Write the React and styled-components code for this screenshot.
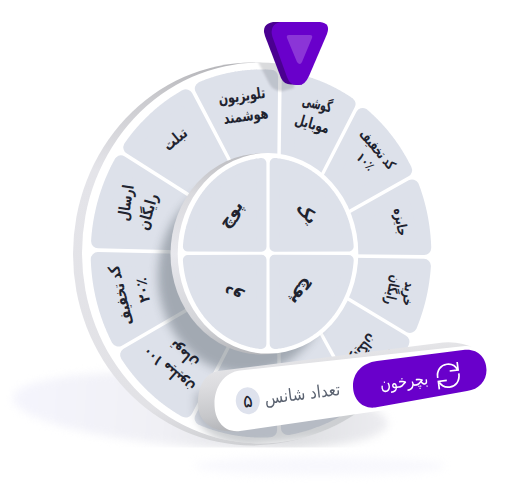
import React from "react";
import styled, { createGlobalStyle } from "styled-components";

const Global = createGlobalStyle`
  body { margin: 0; background: #fff; font-family: "DejaVu Sans", sans-serif; }
`;
const Stage = styled.main`
  position: relative;
  width: 520px;
  height: 500px;
  overflow: hidden;
  background: #fff;
`;
const Art = styled.svg`
  display: block;
  width: 520px;
  height: 500px;
`;
const Label = styled.text`
  font-family: "DejaVu Sans", sans-serif;
  font-weight: 700;
  font-size: ${(p) => p.$size || 15.5}px;
  fill: #20232f;
  text-anchor: middle;
  direction: rtl;
`;
const PanelContent = styled.section`
  position: absolute;
  left: 235px;
  top: 366px;
  width: 226px;
  height: 44px;
  display: flex;
  align-items: center;
  justify-content: space-between;
  direction: rtl;
  transform: rotate(-7deg);
`;
const SpinButton = styled.button`
  display: flex;
  align-items: center;
  gap: 9px;
  height: 42px;
  padding: 0;
  border: 0;
  background: none;
  color: #fff;
  font: 17px "DejaVu Sans", sans-serif;
`;
const SpinIcon = styled.svg`
  flex: none;
  width: 24px;
  height: 28px;
`;
const Chances = styled.div`
  display: flex;
  align-items: center;
  gap: 5px;
  color: #5a6270;
  font-size: 17px;
`;
const Fit = styled.span`
  display: flex;
  justify-content: center;
  width: ${(p) => p.$width}px;
  white-space: nowrap;
  line-height: 28px;
  transform: scaleX(${(p) => p.$stretch || 1});
`;
const Count = styled.span`
  display: grid;
  place-items: center;
  width: 24px;
  height: 27px;
  border-radius: 50%;
  background: #dee2ed;
  color: #20232f;
  font-size: 18px;
  line-height: 27px;
`;

// Each spoke runs from the outer ring to the inner disc.
const OUTER_SPOKES = [
  [280, 70, 279, 160],
  [357, 107, 322, 175],
  [418, 173, 345, 214],
  [431, 257, 350, 256],
  [418, 341, 345, 297],
  [357, 399, 318, 328],
  [279, 436, 279, 345],
  [192, 418, 232, 340],
  [118, 350, 192, 307],
  [91, 250, 178, 252],
  [118, 150, 192, 197],
  [191, 87, 232, 165],
];
const INNER_SPOKES = [
  [268, 158, 268, 253.3],
  [353.5, 253.3, 268, 253.3],
  [268, 349, 268, 253.3],
  [183, 253.3, 268, 253.3],
];

function cells(spokes, ring, radius, gap) {
  const inset = radius + gap / 2;
  const n = spokes.length;
  return spokes.map((a, i) => {
    const b = spokes[(i + 1) % n];
    const angle = (s) => Math.atan2((s[1] - ring.cy) / ring.ry, (s[0] - ring.cx) / ring.rx);
    const from = angle(a);
    let to = angle(b);
    if (to < from) to += Math.PI * 2;
    const distance = (s, x, y, sign) => {
      const dx = s[0] - s[2];
      const dy = s[1] - s[3];
      return (sign * (dx * (y - s[3]) - dy * (x - s[2]))) / Math.hypot(dx, dy);
    };
    const points = [];
    for (let k = 0; k <= 400; k++) {
      const t = from + ((to - from) * k) / 400;
      const x = ring.cx + (ring.rx - radius) * Math.cos(t);
      const y = ring.cy + (ring.ry - radius) * Math.sin(t);
      if (distance(a, x, y, 1) >= inset && distance(b, x, y, -1) >= inset) points.push([x, y]);
    }
    const foot = (s, sign) => {
      const dx = s[0] - s[2];
      const dy = s[1] - s[3];
      const len = Math.hypot(dx, dy);
      return [s[2] - (sign * dy * inset) / len, s[3] + (sign * dx * inset) / len];
    };
    if (n === 4) {
      const sx = i < 2 ? 1 : -1;
      const sy = i === 0 || i === 3 ? -1 : 1;
      points.push([268 + sx * inset, 253.3 + sy * inset]);
    } else {
      points.push(foot(b, -1), foot(a, 1));
    }
    return "M" + points.map((p) => p[0].toFixed(1) + " " + p[1].toFixed(1)).join("L") + "Z";
  });
}

const OUTER_CELLS = cells(OUTER_SPOKES, { cx: 261, cy: 253.5, rx: 170.3, ry: 184 }, 7, 3.4);
const INNER_CELLS = cells(INNER_SPOKES, { cx: 268.3, cy: 253.5, rx: 85.6, ry: 95.8 }, 5, 3);

const LABELS = [
  { t: "گوشی", x: 317, y: 105, r: 14, w: 30 },
  { t: "موبایل", x: 312, y: 125, r: 16, w: 35 },
  { t: "کد تخفیف", x: 377, y: 150, r: 50, w: 47, s: 14 },
  { t: "۱۰٪", x: 365, y: 162, r: 45, w: 19, s: 13 },
  { t: "جایزه", x: 400, y: 222, r: 80, w: 28, s: 14 },
  { t: "خرید", x: 408, y: 294, r: 97, w: 24, s: 14 },
  { t: "رایگان", x: 392, y: 290, r: 103, w: 30, s: 14 },
  { t: "ارسال", x: 385, y: 363, r: 130, w: 28, s: 14 },
  { t: "رایگان", x: 363, y: 348, r: 130, w: 32, s: 14 },
  { t: "۱۰۰ میلیون", x: 169, y: 369, r: 221, w: 62 },
  { t: "تومان", x: 184, y: 354, r: 221, w: 33 },
  { t: "کد تخفیف", x: 122, y: 295, r: 256, w: 61 },
  { t: "۲۰٪", x: 144, y: 290, r: 260, w: 25, s: 15 },
  { t: "ارسال", x: 127, y: 203, r: 279, w: 36 },
  { t: "رایگان", x: 149, y: 212, r: 286, w: 37 },
  { t: "تبلت", x: 176, y: 140, r: 320, w: 26 },
  { t: "تلویزیون", x: 242, y: 97, r: 352, w: 47 },
  { t: "هوشمند", x: 246, y: 117, r: 352, w: 45 },
  { t: "پوچ", x: 232, y: 215, r: 306, w: 29, s: 17 },
  { t: "یک", x: 306, y: 214, r: 50, w: 22, s: 17 },
  { t: "دو", x: 233, y: 293, r: 210, w: 18, s: 17 },
  { t: "پوچ", x: 302, y: 292, r: 127, w: 29, s: 17 },
];

function Definitions() {
  return (
    <defs>
      <linearGradient id="rim" x1="0" y1="0" x2="0" y2="1">
        <stop offset="0" stopColor="#b4b4b8" />
        <stop offset=".09" stopColor="#cacace" />
        <stop offset=".28" stopColor="#e4e4e9" />
        <stop offset=".9" stopColor="#e2e2e6" />
        <stop offset="1" stopColor="#cfd0d3" />
      </linearGradient>
      <linearGradient id="discRim" x1="0" y1="0" x2="0" y2="1">
        <stop offset="0" stopColor="#bcbcc0" />
        <stop offset=".2" stopColor="#d9d9dd" />
        <stop offset=".5" stopColor="#e8e8ed" />
        <stop offset=".85" stopColor="#d3d4d8" />
        <stop offset="1" stopColor="#b5b6ba" />
      </linearGradient>
      <linearGradient id="panelRim" gradientUnits="userSpaceOnUse" x1="215" y1="366" x2="222" y2="432">
        <stop offset="0" stopColor="#e5e5e8" />
        <stop offset=".3" stopColor="#dcdcdf" />
        <stop offset=".75" stopColor="#c6c7ca" />
        <stop offset="1" stopColor="#b3b4b8" />
      </linearGradient>
      <linearGradient id="floor" gradientUnits="userSpaceOnUse" x1="10" y1="0" x2="390" y2="0">
        <stop offset="0" stopColor="#f5f5fd" />
        <stop offset=".4" stopColor="#f0f0f5" />
        <stop offset=".75" stopColor="#dedfe2" />
        <stop offset="1" stopColor="#ededf1" />
      </linearGradient>
      <filter id="blur1" x="-30%" y="-30%" width="160%" height="160%"><feGaussianBlur stdDeviation="1.3" /></filter>
      <filter id="blur3" x="-30%" y="-50%" width="160%" height="200%" colorInterpolationFilters="sRGB"><feGaussianBlur stdDeviation="4" /></filter>
      <filter id="blur6" x="-30%" y="-50%" width="160%" height="200%"><feGaussianBlur stdDeviation="5" /></filter>
      <clipPath id="face"><ellipse cx="260" cy="253" rx="178" ry="190.5" /></clipPath>
      <clipPath id="ground"><rect width="520" height="447.5" /></clipPath>
    </defs>
  );
}

function Floor() {
  return (
    <g>
      <ellipse cx="320" cy="466" rx="125" ry="9" fill="#f8f8fd" filter="url(#blur3)" />
      <g clipPath="url(#ground)">
        <ellipse cx="200" cy="411" rx="188" ry="36" fill="url(#floor)" filter="url(#blur3)" transform="rotate(4 200 411)" />
      </g>
    </g>
  );
}

function Wheel() {
  return (
    <g>
      <ellipse cx="252.5" cy="254" rx="179.5" ry="191.5" fill="url(#rim)" />
      <ellipse cx="260" cy="253" rx="178" ry="190.5" fill="#fff" />
      <g fill="#dde1ea" stroke="#dde1ea" strokeWidth="14" strokeLinejoin="round">
        {OUTER_CELLS.map((d) => <path key={d} d={d} />)}
      </g>
      <g clipPath="url(#face)">
        <ellipse cx="245" cy="276" rx="87" ry="98" fill="#5c666f" opacity=".45" filter="url(#blur6)" />
        <path d="M196 392Q186 440 250 446L390 430L396 396Z" fill="#6c737b" opacity=".34" filter="url(#blur3)" />
      </g>
    </g>
  );
}

function Disc() {
  return (
    <g>
      <ellipse cx="261" cy="254" rx="90.5" ry="100.5" fill="url(#discRim)" />
      <ellipse cx="268" cy="253.3" rx="90.3" ry="100.3" fill="#fff" />
      <g fill="#dde1ea" stroke="#dde1ea" strokeWidth="10" strokeLinejoin="round">
        {INNER_CELLS.map((d) => <path key={d} d={d} />)}
      </g>
    </g>
  );
}

function Pointer() {
  return (
    <g>
      <g clipPath="url(#face)">
        <path d="M256 58L270 85Q275 92 283 91L294 88V58Z" fill="#4a4e58" opacity=".2" filter="url(#blur1)" />
      </g>
      <path d="M273 22H290L302 84.500H291Q284 84.500 281 78L265 36Q261 24 273 22Z" fill="#4a0091" />
      <path d="M280 22H320Q331 23 327 34L309 76Q305 85 299 85H296Q290 85 287 77L272.500 37Q269 25 280 22Z" fill="#6900cb" />
      <path d="M289 35H310Q313 35 312 38L302 62Q300 66 297 62L287 38Q286 35 289 35Z" fill="#8b35d7" />
    </g>
  );
}

function PanelShape() {
  return (
    <g>
      <path d="M218 371L443 342.500Q461 341 476 349L400 375L238 431.500Q198 433 198 403C198 385 206 373 218 371Z" fill="url(#panelRim)" />
      <path d="M240 370.500L465 346C484 345 492 358 491 370C491 384 483 395 467 398L240 431C223 433 214.500 419 214.500 404C214.500 387 224 372.500 240 370.500Z" fill="#fff" />
      <path d="M377 361L463 350C478 348 486.500 358 486.500 370C486.500 381 479 389.500 467 391L375 407.500C361 409 353 398 353 386C353 373 362 363 377 361Z" fill="#6900cb" />
    </g>
  );
}

export default function App() {
  return (
    <Stage>
      <Global />
      <Art viewBox="0 0 520 500">
        <Definitions />
        <Floor />
        <Wheel />
        <Disc />
        {LABELS.map((l, i) => (
          <g key={i} transform={`translate(${l.x} ${l.y}) rotate(${l.r})`}>
            <Label y="4" $size={l.s} textLength={l.w} lengthAdjust="spacingAndGlyphs">{l.t}</Label>
          </g>
        ))}
        <Pointer />
        <PanelShape />
      </Art>
      <PanelContent>
        <SpinButton>
          <SpinIcon viewBox="0 0 24 28" fill="none" stroke="#fff" strokeWidth="1.7">
            <path d="M1.200 15C1 7 6 2.500 12 2.500C17 2.500 20.500 5.500 22 9.500M22.500 1.500V9.500H14" />
            <path d="M22.800 13C23 21 18 25.500 12 25.500C7 25.500 3.500 22.500 2 18.500M1.500 26.500V18.500H10" />
          </SpinIcon>
          <Fit $width={47} $stretch={0.85}>بچرخون</Fit>
        </SpinButton>
        <Chances>
          <Fit $width={76} $stretch={0.89}>تعداد شانس</Fit>
          <Count>۵</Count>
        </Chances>
      </PanelContent>
    </Stage>
  );
}
